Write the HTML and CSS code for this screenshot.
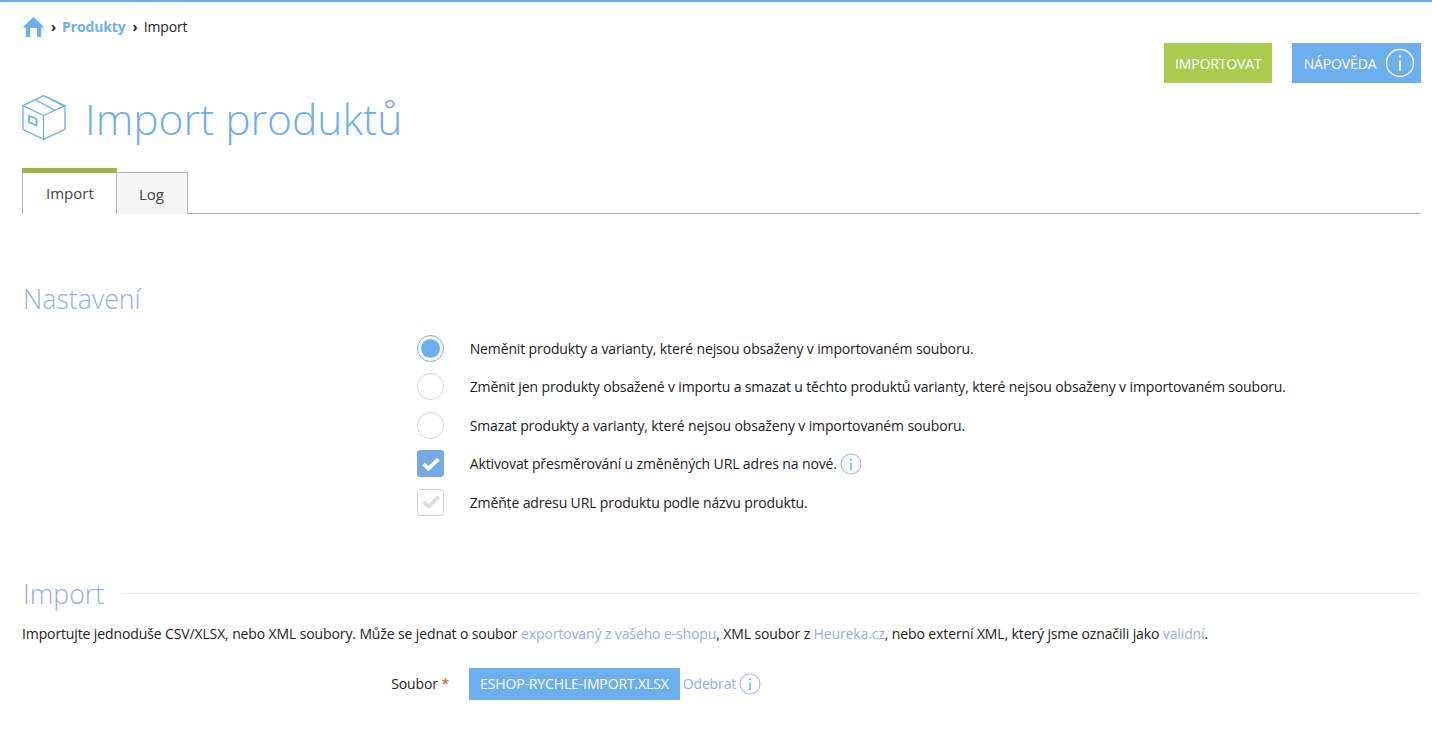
FILE: index.html
```html
<!DOCTYPE html>
<html lang="cs">
<head>
<meta charset="utf-8">
<title>Import produktů</title>
<link rel="stylesheet" href="styles.css">
</head>
<body>
<div class="page">
  <nav class="crumbs">
    <svg class="home" width="23" height="20" viewBox="0 0 23 20"><path fill="#6daeee" fill-rule="evenodd" d="M11.5 0 L22.5 10.6 L19.2 10.6 L19.2 20 L3.8 20 L3.8 10.6 L.5 10.6 Z M8 11 L8 20 L15 20 L15 11 Z"/></svg>
    <span class="sep">›</span>
    <a class="crumb-link">Produkty</a>
    <span class="sep">›</span>
    <span class="crumb-current">Import</span>
  </nav>
  <div class="actions">
    <a class="btn btn-green">IMPORTOVAT</a>
    <a class="btn btn-blue">NÁPOVĚDA
      <svg class="btn-info" width="30" height="30" viewBox="0 0 30 30"><circle cx="15" cy="15" r="13.5" fill="none" stroke="#fff" stroke-width="1.4"/><path d="M15 12.5V23" stroke="#fff" stroke-width="1.8"/><circle cx="15" cy="8.6" r="1.3" fill="#fff"/></svg>
    </a>
  </div>
  <header class="title">
    <svg class="box" width="44" height="45" viewBox="0 0 44 45" fill="none" stroke="#6daeee" stroke-width="1.3" stroke-linejoin="round"><path d="M21.5 .7 L43 10.7 V34.3 L21.5 44.3 L1 34.3 V10.7 Z"/><path d="M1 10.7 L21.5 20.5 L43 10.7 M21.5 20.5 V44.3"/><path d="M13 4.6 L33 15.3 M23 1.2 L41 10.8"/><path d="M7 20.5 L14.5 24 V30.5 L7 27 Z" stroke-width="1.7"/></svg>
    <h1>Import produktů</h1>
  </header>
  <div class="tabs">
    <a class="tab tab-active">Import</a>
    <a class="tab tab-log">Log</a>
  </div>
  <h2 class="section-title settings-title">Nastavení</h2>
  <div class="options">
    <div class="option"><span class="radio radio-on"></span><span>Neměnit produkty a varianty, které nejsou obsaženy v importovaném souboru.</span></div>
    <div class="option"><span class="radio"></span><span>Změnit jen produkty obsažené v importu a smazat u těchto produktů varianty, které nejsou obsaženy v importovaném souboru.</span></div>
    <div class="option"><span class="radio"></span><span>Smazat produkty a varianty, které nejsou obsaženy v importovaném souboru.</span></div>
    <div class="option"><span class="check check-on"><svg width="20" height="16" viewBox="0 0 20 16"><path d="M2.5 8 L7.5 12.6 L17.5 3" fill="none" stroke="#fff" stroke-width="3.8"/></svg></span><span>Aktivovat přesměrování u změněných URL adres na nové.</span>
      <svg class="info" width="22" height="22" viewBox="0 0 22 22"><circle cx="11" cy="11" r="10" fill="none" stroke="#a9b4ee" stroke-width="1.1"/><path d="M11 9.5V17" stroke="#6daeee" stroke-width="1.5"/><circle cx="11" cy="6.5" r="1.1" fill="#6daeee"/></svg></div>
    <div class="option"><span class="check"><svg width="20" height="16" viewBox="0 0 20 16"><path d="M2.5 8 L7.5 12.6 L17.5 3" fill="none" stroke="#dcdcdc" stroke-width="3.8"/></svg></span><span>Změňte adresu URL produktu podle názvu produktu.</span></div>
  </div>
  <div class="legend">
    <h2 class="section-title">Import</h2>
    <div class="legend-line"></div>
  </div>
  <p class="intro">Importujte jednoduše CSV/XLSX, nebo XML soubory. Může se jednat o soubor <a>exportovaný z vašeho e-shopu</a>, XML soubor z <a>Heureka.cz</a>, nebo externí XML, který jsme označili jako <a>validní</a>.</p>
  <div class="file-row">
    <label class="file-label">Soubor <span class="req">*</span></label>
    <a class="file-btn">ESHOP-RYCHLE-IMPORT.XLSX</a>
    <a class="remove">Odebrat</a>
    <svg class="info" width="22" height="22" viewBox="0 0 22 22"><circle cx="11" cy="11" r="10" fill="none" stroke="#a9b4ee" stroke-width="1.1"/><path d="M11 9.5V17" stroke="#6daeee" stroke-width="1.5"/><circle cx="11" cy="6.5" r="1.1" fill="#6daeee"/></svg>
  </div>
</div>
</body>
</html>
```
FILE: styles.css
```css
* { box-sizing: border-box; }
html, body { margin: 0; padding: 0; }
body {
  font-family: "Open Sans", sans-serif;
  font-size: 14px;
  letter-spacing: -0.13px;
  color: #222;
  background: #fff;
  overflow: hidden;
}
.page {
  height: 747px;
  border-top: 2px solid #6daeee;
  padding: 0 11px 0 22px;
  position: relative;
}
a { color: #9aaaea; }

.crumbs {
  display: flex;
  align-items: center;
  height: 20px;
  margin-top: 15px;
  line-height: 20px;
}
.home { margin-right: 4px; }
.sep { font-size: 14px; font-weight: 700; margin: 0 6px 0 2px; color: #222; }
.crumb-link { color: #6daeee; font-weight: 700; margin: 0 5px 0 0; }

.actions {
  display: flex;
  justify-content: flex-end;
  gap: 20px;
  margin-top: 6px;
}
.btn {
  height: 40px;
  display: flex;
  align-items: center;
  color: #fff;
  font-size: 14px;
}
.btn-green { background: #acca50; padding: 0 10.6px; }
.btn-blue { background: #6daeee; padding: 0 6px 0 11.5px; }
.btn-info { margin-left: 8.5px; }

.title {
  display: flex;
  align-items: center;
  height: 60px;
  margin-top: 7px;
}
.box { margin-right: 19px; margin-bottom: 5px; }
h1 {
  margin: 0 0 2px;
  font-weight: 300;
  font-size: 42.5px;
  letter-spacing: 0;
  line-height: 56px;
  color: #6daeee;
}

.tabs {
  display: flex;
  align-items: flex-end;
  height: 46px;
  margin-top: 18px;
  border-bottom: 1px solid #b4b4b4;
}
.tab {
  display: block;
  color: #444;
  font-size: 15px;
  letter-spacing: 0;
  height: 42px;
  line-height: 42px;
  padding: 0 23px;
  margin-bottom: -1px;
  border: 1px solid #b4b4b4;
  border-bottom: 0;
  background: #f5f5f5;
  margin-left: -1px;
}
.tab:first-child { margin-left: 0; }
.tab-log { width: 72px; padding: 0 0 0 22px; }
.tab-active {
  height: 46px;
  line-height: 40px;
  background: #fff;
  border-top: 5px solid #9ab540;
  border-right: 1px solid #b4b4b4;
  padding: 0 23px;
  width: 95px;
  position: relative;
  z-index: 1;
}

.section-title {
  margin: 0;
  padding-left: 1px;
  font-weight: 300;
  font-size: 26.7px;
  letter-spacing: 0;
  line-height: 34px;
  color: #9aaaea;
}
.settings-title { margin-top: 68px; }

.options {
  margin-top: 13px;
  padding-left: 395px;
}
.option {
  display: flex;
  align-items: center;
  height: 38.5px;
  color: #222;
}
.radio, .check {
  flex: none;
  width: 27px;
  height: 27px;
  margin-right: 25.7px;
  display: flex;
  align-items: center;
  justify-content: center;
}
.radio {
  border-radius: 50%;
  border: 1px solid #d2d2d2;
  background: #fff;
}
.radio-on { border-color: #6daeee; }
.radio-on::after {
  content: "";
  width: 19px;
  height: 19px;
  border-radius: 50%;
  background: #6daeee;
}
.check {
  border-radius: 3px;
  border: 1px solid #d2d2d2;
}
.check-on { background: #74a9e6; border-color: #74a9e6; }
.info { margin-left: 3px; flex: none; }

.legend {
  display: flex;
  align-items: center;
  margin-top: 55px;
}
.legend-line {
  flex: 1;
  height: 1px;
  background: #e8e8e8;
  margin-left: 18px;
}
.intro {
  margin: 13px 0 0;
  line-height: 20px;
  letter-spacing: -0.12px;
}
.file-row {
  display: flex;
  align-items: center;
  margin-top: 24px;
  height: 32px;
}
.file-label {
  width: 447px;
  text-align: right;
  padding-right: 20px;
  color: #222;
}
.req { color: #b3543d; }
.file-btn {
  height: 32px;
  line-height: 32px;
  background: #6daeee;
  color: #fff;
  padding: 0 11px;
  font-size: 14px;
}
.remove { margin-left: 3px; color: #9aaaea; }
.file-row .info { margin-left: 3px; }
```
